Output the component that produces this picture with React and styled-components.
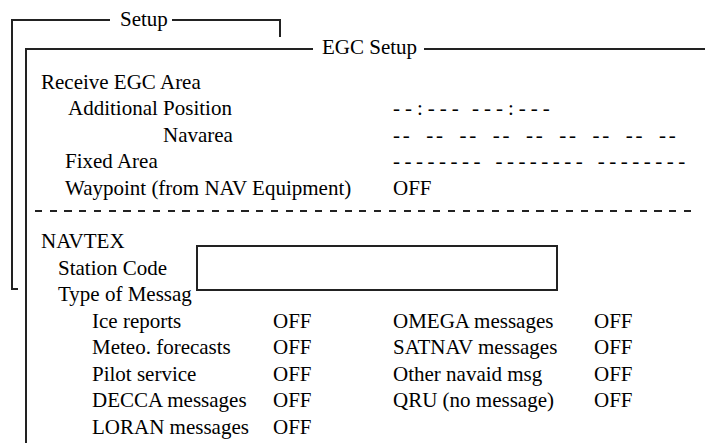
import React from "react";
import styled, { createGlobalStyle } from "styled-components";

const GlobalStyle = createGlobalStyle`
  html, body {
    margin: 0;
    padding: 0;
    background: #fff;
  }
`;

const Desktop = styled.div`
  position: relative;
  width: 705px;
  height: 443px;
  overflow: hidden;
  background: #fff;
  color: #000;
  font-family: "Liberation Serif", "Times New Roman", serif;
  font-size: 21px;
  line-height: 26.5px;
`;

const Frame = styled.div`
  position: absolute;
  border-top: 2px solid #222;
  border-left: 2px solid #222;
  background: #fff;
`;

const SetupWindow = styled(Frame)`
  left: 11px;
  top: 19px;
  width: 268px;
  height: 269px;

  &::before {
    content: "";
    position: absolute;
    right: 0;
    top: -2px;
    width: 2px;
    height: 18px;
    background: #222;
  }

  &::after {
    content: "";
    position: absolute;
    left: -2px;
    bottom: 0;
    width: 7px;
    height: 2px;
    background: #222;
  }
`;

const EgcWindow = styled(Frame)`
  left: 25px;
  top: 48px;
  right: -20px;
  bottom: -20px;
  padding: 18.6px 0 0 14px;
  z-index: 1;
`;

const Legend = styled.span`
  position: absolute;
  top: ${(p) => p.$top}px;
  left: ${(p) => p.$left}px;
  padding: 0 ${(p) => p.$padR}px 0 ${(p) => p.$padL}px;
  background: #fff;
  white-space: nowrap;
`;

const Row = styled.div`
  display: grid;
  grid-template-columns: 352px auto;
  height: 26.5px;
`;

const Label = styled.span`
  padding-left: ${(p) => p.$indent || 0}px;
  white-space: pre;
`;

const Value = styled.span`
  white-space: pre;
`;

const DashValue = styled.span`
  white-space: pre;
  letter-spacing: ${(p) => p.$ls}px;
  word-spacing: ${(p) => p.$ws}px;
`;

const Separator = styled.div`
  margin: 8.5px 0 16.6px -6px;
  width: 658px;
  height: 2px;
  background: repeating-linear-gradient(
    90deg,
    #222 0 7px,
    transparent 7px 14.75px
  );
`;

const Line = styled.div`
  height: 26.5px;
  white-space: pre;
`;

const MessageGrid = styled.div`
  display: grid;
  grid-template-columns: 181px 120px 201px auto;
  grid-auto-rows: 26.5px;
  padding-left: 51px;
`;

const StationBox = styled.div`
  position: absolute;
  left: 169px;
  top: 195px;
  width: 362px;
  height: 46px;
  box-sizing: border-box;
  border: 2px solid #222;
  background: #fff;
`;

const messages = [
  ["Ice reports", "OFF", "OMEGA messages", "OFF"],
  ["Meteo. forecasts", "OFF", "SATNAV messages", "OFF"],
  ["Pilot service", "OFF", "Other navaid msg", "OFF"],
  ["DECCA messages", "OFF", "QRU (no message)", "OFF"],
  ["LORAN messages", "OFF", "", ""],
];

export default function App() {
  return (
    <>
      <GlobalStyle />
      <Desktop>
        <SetupWindow>
          <Legend $top={-15} $left={97} $padL={10} $padR={4}>
            Setup
          </Legend>
        </SetupWindow>

        <EgcWindow>
          <Legend $top={-16} $left={286} $padL={9} $padR={7}>
            EGC Setup
          </Legend>

          <Row>
            <Label>Receive EGC Area</Label>
          </Row>
          <Row>
            <Label $indent={27}>Additional Position</Label>
            <DashValue $ls={5} $ws={-2}>--:--- ---:---</DashValue>
          </Row>
          <Row>
            <Label $indent={122}>Navarea</Label>
            <DashValue $ls={2.8} $ws={5.6}>-- -- -- -- -- -- -- -- --</DashValue>
          </Row>
          <Row>
            <Label $indent={24}>Fixed Area</Label>
            <DashValue $ls={4.5} $ws={0.7}>-------- -------- --------</DashValue>
          </Row>
          <Row>
            <Label $indent={24}>Waypoint (from NAV Equipment)</Label>
            <Value>OFF</Value>
          </Row>

          <Separator />

          <Line>NAVTEX</Line>
          <Line>
            <Label $indent={17}>Station Code</Label>
          </Line>
          <Line>
            <Label $indent={17}>Type of Messag</Label>
          </Line>

          <MessageGrid>
            {messages.map((m, i) =>
              m.map((cell, j) => <Value key={`${i}-${j}`}>{cell}</Value>)
            )}
          </MessageGrid>

          <StationBox />
        </EgcWindow>
      </Desktop>
    </>
  );
}
